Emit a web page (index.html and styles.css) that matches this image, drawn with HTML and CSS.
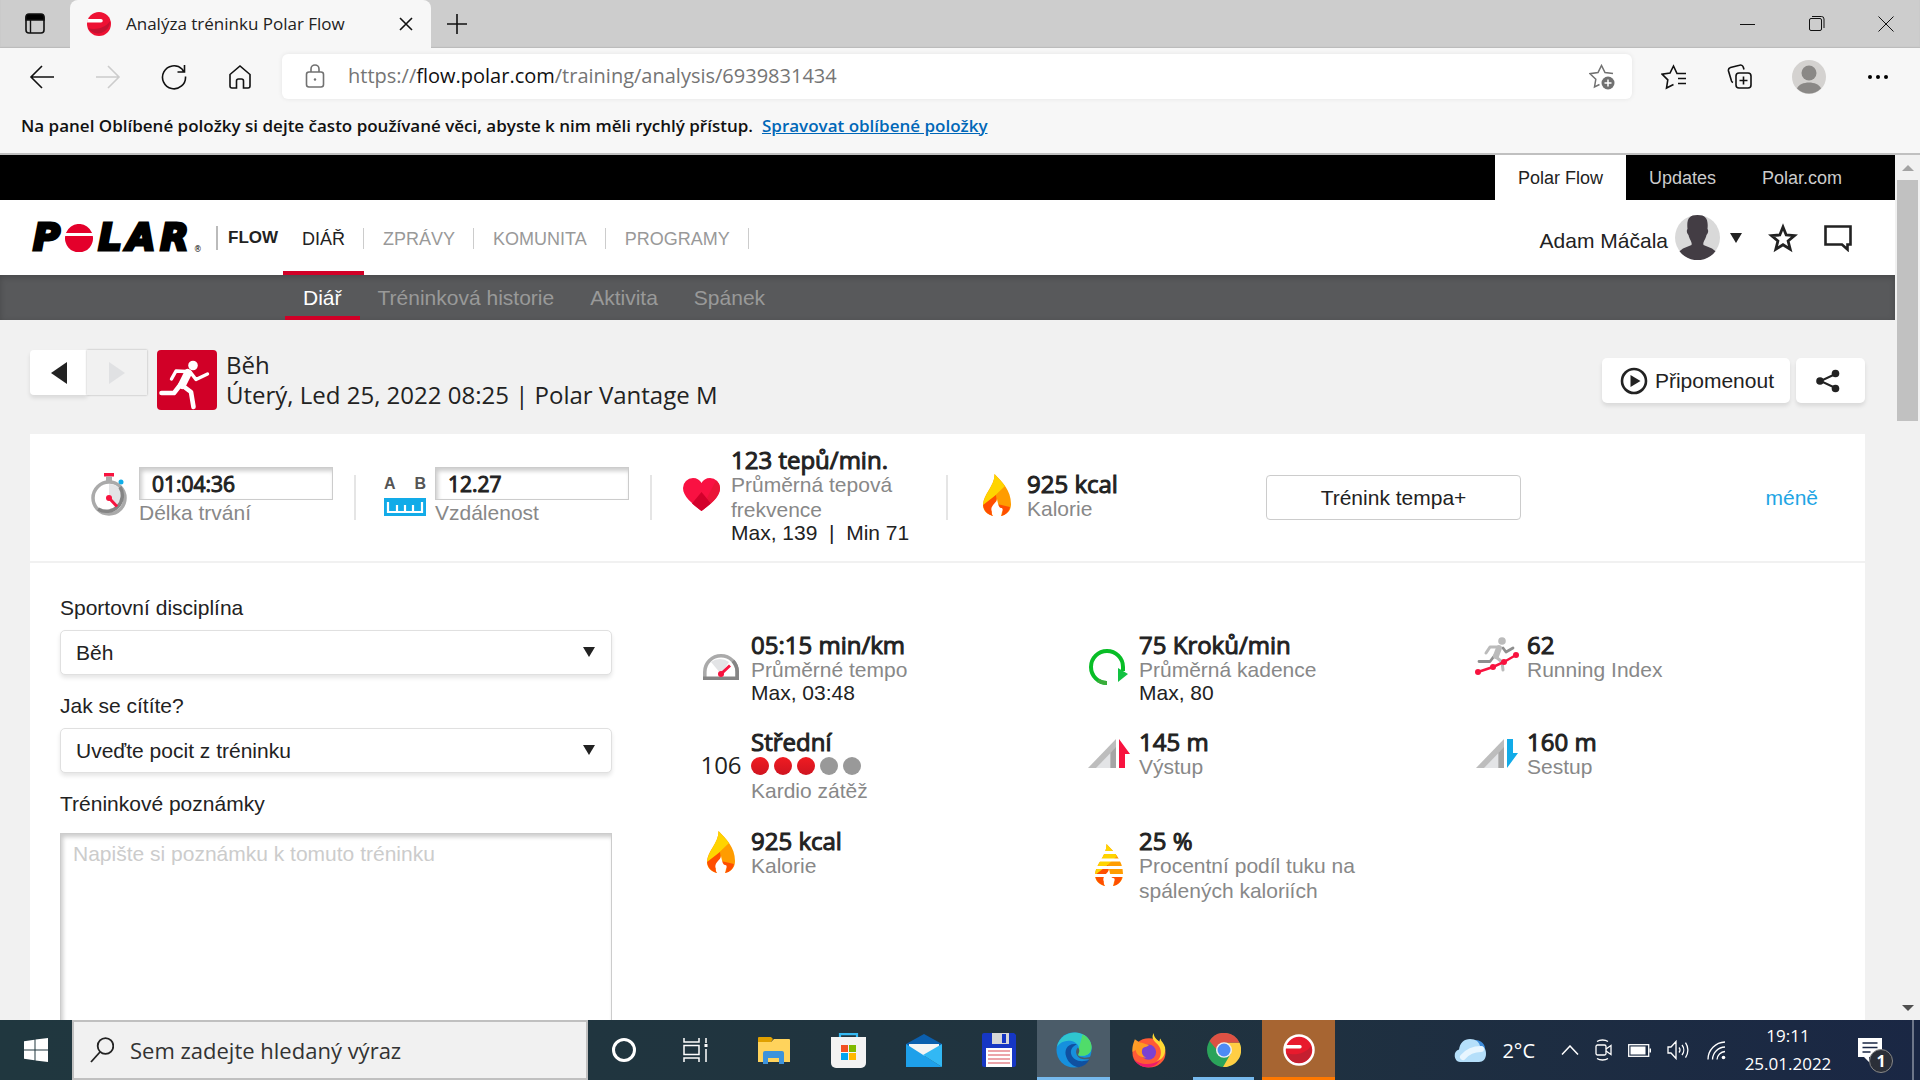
FILE: index.html
```html
<!DOCTYPE html>
<html lang="cs">
<head>
  <meta charset="UTF-8">
  <title>Analýza tréninku Polar Flow</title>
  <link rel="stylesheet" href="styles.css">
</head>
<body>
  <!-- Browser tabs -->
  <header class="tabstrip">
    <button class="tab-menu" aria-label="Karty"><svg width="22" height="24" viewBox="0 0 22 24"><rect x="2" y="3" width="18" height="18" rx="3" fill="none" stroke="#111" stroke-width="1.6"/><path d="M2 8V5a3 3 0 0 1 3-3h12a3 3 0 0 1 3 3v3zM6.500 8v13" stroke="#111" stroke-width="1.4"/></svg></button>
    <div class="tab">
      <svg width="26" height="26" viewBox="0 0 26 26"><circle cx="13" cy="13" r="12" fill="#ee1133"/><path d="M2 17c6 2 17 1 22-7a12 12 0 0 1-22 7z" fill="#c41230"/><path d="M1.500 8H15a1.600 1.600 0 0 1 0 3.500H1z" fill="#fff"/></svg>
      <span class="tab-title">Analýza tréninku Polar Flow</span>
      <button aria-label="Zavřít kartu"><svg width="14" height="14" viewBox="0 0 14 14"><path d="M1 1l12 12M13 1L1 13" stroke="#111" stroke-width="1.6"/></svg></button>
    </div>
    <button class="tab-new" aria-label="Nová karta"><svg width="22" height="22" viewBox="0 0 22 22"><path d="M11 1v20M1 11h20" stroke="#111" stroke-width="1.6"/></svg></button>
    <div class="window-buttons">
      <button aria-label="Minimalizovat"><svg width="16" height="16"><path d="M0 8.500h15" stroke="#111"/></svg></button>
      <button aria-label="Obnovit"><svg width="16" height="16" fill="none" stroke="#111"><rect x=".5" y="2.500" width="12" height="12" rx="1.500"/><path d="M3 .5h9.500a2.500 2.500 0 0 1 2.500 2.500v9"/></svg></button>
      <button aria-label="Zavřít"><svg width="16" height="16"><path d="M.5.5l15 15M15.500.5l-15 15" stroke="#111"/></svg></button>
    </div>
  </header>

  <!-- Browser toolbar -->
  <div class="toolbar">
    <button aria-label="Zpět"><svg width="26" height="26" viewBox="0 0 26 26" class="line"><path d="M25 13H2M13 2L2 13l11 11"/></svg></button>
    <button aria-label="Vpřed"><svg width="26" height="26" viewBox="0 0 26 26" class="line faded"><path d="M1 13h23M13 2l11 11-11 11"/></svg></button>
    <button aria-label="Aktualizovat"><svg width="26" height="26" viewBox="0 0 26 26" class="line"><path d="M24.500 12.500A11.500 11.500 0 1 1 21 5l2 3M23.500 1v7h-7"/></svg></button>
    <button aria-label="Domů"><svg width="26" height="26" viewBox="0 0 26 26" class="line"><path d="M3 10.500L13 2l10 8.500V22a2 2 0 0 1-2 2h-4.500v-7a2 2 0 0 0-2-2h-3a2 2 0 0 0-2 2v7H5a2 2 0 0 1-2-2z"/></svg></button>
    <div class="address">
      <svg width="20" height="26" viewBox="0 0 20 26" fill="none" stroke="#717171" stroke-width="1.600"><rect x="1.500" y="8" width="17" height="15" rx="2.500"/><path d="M6 8V5a4 4 0 0 1 8 0v3"/><circle cx="10" cy="15.500" r="1.200" fill="#717171" stroke="none"/></svg>
      <span class="url">https://<b>flow.polar.com</b>/training/analysis/6939831434</span>
      <button aria-label="Přidat do oblíbených"><svg width="26" height="26" viewBox="0 0 26 26" fill="none" stroke="#717171" stroke-width="1.500"><path d="M24 9.500l-8-1L12.500 1.500 9 8.500l-8 1.200 5.800 5.600L5.500 23l5-2.500"/><circle cx="19" cy="19" r="6.500" fill="#717171" stroke="none"/><path d="M19 15.500v7M15.500 19h7" stroke="#fff"/></svg></button>
    </div>
    <button aria-label="Oblíbené"><svg width="26" height="26" viewBox="0 0 26 26" class="line"><path d="M25 9.500h-9L12.500 2 9 9l-8 1.200 5.800 5.600L5.500 24l7-3.500M17 14.500h8M17 19.500h8"/></svg></button>
    <button aria-label="Kolekce"><svg width="26" height="26" viewBox="0 0 26 26" class="line"><rect x="9" y="9" width="15" height="15" rx="3"/><path d="M16.500 12.500v8M12.500 16.500h8M6 18.500A3 3 0 0 1 4.500 17L1.500 7a3 3 0 0 1 2-3.500l9-2.300a3 3 0 0 1 3.800 2L17 5.500"/></svg></button>
    <button class="profile" aria-label="Profil"><svg width="34" height="34" viewBox="0 0 34 34"><circle cx="17" cy="17" r="17" fill="#d4d2d0"/><circle cx="17" cy="13" r="7.500" fill="#8a8886"/><path d="M5 28.500c3-8 21-8 24 0a17 17 0 0 1-24 0z" fill="#8a8886"/></svg></button>
    <button aria-label="Další"><svg width="20" height="6" viewBox="0 0 20 6"><circle cx="2" cy="3" r="2"/><circle cx="10" cy="3" r="2"/><circle cx="18" cy="3" r="2"/></svg></button>
  </div>
  <div class="favorites">
    <span>Na panel Oblíbené položky si dejte často používané věci, abyste k nim měli rychlý přístup.</span>
    <a href="#">Spravovat oblíbené položky</a>
  </div>

  <div class="viewport">
    <div class="page">
      <nav class="topbar">
        <a href="#" class="active">Polar Flow</a>
        <a href="#">Updates</a>
        <a href="#">Polar.com</a>
      </nav>

      <header class="site-header">
        <a href="#" class="logo" aria-label="Polar">
          <span>P</span>
          <svg width="28" height="28" viewBox="0 0 28 28"><path d="M.9 9a14 14 0 0 1 26.200 0zM.2 12h27.600A14 14 0 1 1 .2 12z" fill="#e4002b"/></svg>
          <span>L</span><span>A</span><span>R</span>
          <small>®</small>
        </a>
        <span class="flow">FLOW</span>
        <nav class="main-nav">
          <a href="#" class="active">DIÁŘ</a>
          <a href="#">ZPRÁVY</a>
          <a href="#">KOMUNITA</a>
          <a href="#">PROGRAMY</a>
        </nav>
        <div class="user">
          <span>Adam Máčala</span>
          <svg width="45" height="45" viewBox="0 0 45 45"><circle cx="22.500" cy="22.500" r="22.500" fill="#d9d9d9"/><path d="M22.500 0C14 0 11.500 4 12.500 14c-1 1-1 4 1 6 1 5 4 7 3 10L8 33.500 4.500 36.200a22.500 22.500 0 0 0 36 0L37 33.500 28.500 30c-1-3 2-5 3-10 2-2 2-5 1-6C33.500 4 31 0 22.500 0z" fill="#433d44"/></svg>
          <svg width="12" height="10" viewBox="0 0 12 10"><path d="M0 0h12L6 10z" fill="#222"/></svg>
          <button aria-label="Oblíbené"><svg width="30" height="30" viewBox="0 0 30 30"><path d="M15 4l3.200 8 8.300.6-6.400 5.400 2.100 8.200L15 21.700l-7.200 4.500 2.100-8.200-6.400-5.400 8.300-.6z" fill="none" stroke="#222" stroke-width="2.800"/></svg></button>
          <button aria-label="Zprávy"><svg width="28" height="28" viewBox="0 0 28 28"><path d="M1.500 2.500h25v18h-3v5l-5.500-5H1.500z" fill="none" stroke="#222" stroke-width="2.600"/></svg></button>
        </div>
      </header>

      <nav class="sub-nav">
        <a href="#" class="active">Diář</a>
        <a href="#">Tréninková historie</a>
        <a href="#">Aktivita</a>
        <a href="#">Spánek</a>
      </nav>

      <!-- Training title -->
      <section class="title-row">
        <div class="pager">
          <button aria-label="Předchozí"><svg width="16" height="22" viewBox="0 0 16 22"><path d="M16 0v22L0 11z" fill="#222"/></svg></button>
          <button aria-label="Další" disabled><svg width="16" height="22" viewBox="0 0 16 22"><path d="M0 0v22l16-11z" fill="#e0e1e3"/></svg></button>
        </div>
        <svg class="sport" width="60" height="60" viewBox="0 0 60 60"><rect width="60" height="60" rx="4" fill="#d10027"/><circle cx="36" cy="15.500" r="4.800" fill="#fff"/><g fill="none" stroke="#fff" stroke-linecap="round" stroke-linejoin="round"><path d="M31 23L25 35" stroke-width="8"/><path d="M29 21.500l-10-.5-4.500 8M34 23l5 6.500L50.500 24" stroke-width="3.400"/><path d="M24 34L17 43H4.500M26 36l8 6 2.500 15" stroke-width="4.600"/></g></svg>
        <h1>Běh<br>Úterý, Led 25, 2022 08:25 | Polar Vantage M</h1>
        <div class="actions">
          <button class="relive"><svg width="28" height="28" viewBox="0 0 28 28"><circle cx="14" cy="14" r="12" fill="none" stroke="#222" stroke-width="2.600"/><path d="M10.500 8v12l10-6z" fill="#222"/></svg>Připomenout</button>
          <button class="share" aria-label="Sdílet"><svg width="24" height="24" viewBox="0 0 24 24" fill="#222"><path d="M19.500 5L4.500 12l15 7" fill="none" stroke="#222" stroke-width="2"/><circle cx="19.500" cy="4.500" r="3.800"/><circle cx="4" cy="12" r="3.800"/><circle cx="19.500" cy="19.500" r="3.800"/></svg></button>
        </div>
      </section>

      <main class="card">
        <section class="summary">
          <div class="stat">
            <span class="icon"><svg width="36" height="44" viewBox="0 0 36 44"><rect x="13" y="0" width="10" height="3.500" fill="#f8133f"/><rect x="15" y="3.500" width="6" height="5" fill="#aaa"/><circle cx="30" cy="9" r="2.500" fill="#10aee9"/><circle cx="18" cy="25" r="16" fill="#fff" stroke="#aaa" stroke-width="3.500"/><path d="M18 25V11a14 14 0 0 1 10 24z" fill="#e3e4e6"/><path d="M29 14a16 16 0 0 1-22 22" fill="none" stroke="#858585" stroke-width="3.500"/><circle cx="18" cy="25" r="3" fill="#f8133f"/><path d="M18 25l8 8.500" stroke="#f8133f" stroke-width="3"/></svg></span>
            <div class="text">
              <input id="duration" type="text" value="01:04:36">
              <label for="duration">Délka trvání</label>
            </div>
          </div>
          <div class="stat">
            <span class="icon"><svg width="42" height="42" viewBox="0 0 42 42"><text x="0" y="15" class="ab">A</text><text x="42" y="15" text-anchor="end" class="ab">B</text><rect y="24" width="42" height="18" fill="#12abe8"/><path d="M4 28v10h34V28M13 38v-7M21 38v-7M29 38v-7" fill="none" stroke="#fff" stroke-width="2.200"/></svg></span>
            <div class="text">
              <input id="distance" type="text" value="12.27">
              <label for="distance">Vzdálenost</label>
            </div>
          </div>
          <div class="stat">
            <span class="icon"><svg width="37" height="33" viewBox="0 0 37 33"><path d="M18.500 33C10 26 0 19 0 10A10 10 0 0 1 10 0c4 0 7 2 8.500 5C20 2 23 0 27 0a10 10 0 0 1 10 10c0 9-10 16-18.500 23z" fill="#f91142"/><path d="M18.500 14l9.500 11.500c-3 2.600-6 5-9.500 7.500-3.500-2.500-6.500-4.900-9.500-7.500z" fill="#d3002b"/><path d="M33 2.500L24 20l4 5.500c5-4.500 9-9.500 9-15.500 0-3-1.500-6-4-7.500z" fill="#ea1537"/></svg></span>
            <div class="text">
              <strong>123 tepů/min.</strong>
              <span>Průměrná tepová frekvence</span>
              <em>Max, 139&nbsp; |&nbsp; Min 71</em>
            </div>
          </div>
          <div class="stat">
            <span class="icon"><svg width="28" height="42" viewBox="0 0 28 42"><path d="M11.500 0C12 12 0 20 0 31c0 5 3 9 10 11-4-5 2-9 4-9s6 5 4 9c7-2 10-6 10-12 0-14-9-22-16.500-30z" fill="#ff9c00"/><path d="M11.500 0C12 12 0 20 0 33L22 12C19 8 15 4 11.500 0z" fill="#ffd400"/><path d="M0 31l13-10 1 9 13 3c-1 5-4 8-9 9 3-4 1-7-2-8l-2-4c-2 4-8 7-4 12-6-2-9-5-10-11z" fill="#ff4e00"/><path d="M14 25c0 4-8 7-5 13 1 3 3 4 5 4s4-1 5-4c1-2 1-4-1-4s-3-4-4-9z" fill="#fff"/></svg></span>
            <div class="text">
              <strong>925 kcal</strong>
              <span>Kalorie</span>
            </div>
          </div>
          <button class="tag">Trénink tempa+</button>
          <a href="#" class="less">méně</a>
        </section>

        <section class="details">
          <form class="notes">
            <label for="sport">Sportovní disciplína</label>
            <div class="select">
              <select id="sport"><option>Běh</option></select>
              <svg width="12" height="10" viewBox="0 0 12 10"><path d="M0 0h12L6 10z" fill="#222"/></svg>
            </div>
            <label for="feeling">Jak se cítíte?</label>
            <div class="select">
              <select id="feeling"><option>Uveďte pocit z tréninku</option></select>
              <svg width="12" height="10" viewBox="0 0 12 10"><path d="M0 0h12L6 10z" fill="#222"/></svg>
            </div>
            <label for="note">Tréninkové poznámky</label>
            <textarea id="note" placeholder="Napište si poznámku k tomuto tréninku"></textarea>
          </form>

          <div class="metrics">
            <div class="metric">
              <span class="icon"><svg width="36" height="26" viewBox="0 0 36 26"><path d="M1.800 26V18a16.200 16.200 0 0 1 32.400 0v8" fill="#fff" stroke="#aaa" stroke-width="3.600"/><path d="M18 20L8 8a15 15 0 0 1 18 0z" fill="#e3e4e6"/><path d="M30 7a16 16 0 0 1 4.200 11v6.200H0" fill="none" stroke="#858585" stroke-width="3.600"/><circle cx="18" cy="20" r="3" fill="#f8133f"/><path d="M18 20l9-8.500" stroke="#f8133f" stroke-width="3"/></svg></span>
              <div class="text"><strong>05:15 min/km</strong><span>Průměrné tempo</span><em>Max, 03:48</em></div>
            </div>
            <div class="metric">
              <span class="icon"><svg width="40" height="36" viewBox="0 0 40 36"><path d="M18 34A16 16 0 1 1 34 18v4" fill="none" stroke="#08bd26" stroke-width="4"/><path d="M18 34a16 16 0 0 1-9-2.700" fill="none" stroke="#3bac3b" stroke-width="4"/><path d="M29 19l10 6-10 8z" fill="#12c242"/></svg></span>
              <div class="text"><strong>75 Kroků/min</strong><span>Průměrná kadence</span><em>Max, 80</em></div>
            </div>
            <div class="metric">
              <span class="icon"><svg width="44" height="38" viewBox="0 0 44 38"><circle cx="27" cy="4" r="3.800" fill="#bbb"/><g fill="none" stroke-linecap="round" stroke-linejoin="round"><path d="M20 18l-5 6.500H4M28 11l3 4 7-4" stroke="#8f8f8f" stroke-width="2.800"/><path d="M24 11l-3 8" stroke="#bbb" stroke-width="6"/><path d="M22 10h-7l-4 6M21 20l6 5 1 8" stroke="#bbb" stroke-width="3"/></g><path d="M3 35l15-5 11-5 12-7" fill="none" stroke="#f8133f" stroke-width="2.500"/><g fill="#f8133f"><circle cx="3" cy="35" r="3"/><circle cx="18" cy="30" r="3"/><circle cx="29" cy="25" r="3"/><circle cx="41" cy="18" r="3"/></g></svg></span>
              <div class="text"><strong>62</strong><span>Running Index</span></div>
            </div>
            <div class="metric">
              <span class="score">106</span>
              <div class="text"><strong>Střední</strong><div class="dots"><i class="on"></i><i class="on"></i><i class="on"></i><i></i><i></i></div><span>Kardio zátěž</span></div>
            </div>
            <div class="metric">
              <span class="icon"><svg width="42" height="29" viewBox="0 0 42 29"><path d="M0 29L28 0v29z" fill="#bdbdbd"/><path d="M8 29L22.500 14v15z" fill="#e3e4e6"/><path d="M22.500 14L28 8v21h-5.500z" fill="#a5a5a5"/><path d="M31 0l11 15h-5v14h-6z" fill="#f8133f"/></svg></span>
              <div class="text"><strong>145 m</strong><span>Výstup</span></div>
            </div>
            <div class="metric">
              <span class="icon"><svg width="42" height="29" viewBox="0 0 42 29"><path d="M0 29L28 0v29z" fill="#bdbdbd"/><path d="M8 29L22.500 14v15z" fill="#e3e4e6"/><path d="M22.500 14L28 8v21h-5.500z" fill="#a5a5a5"/><path d="M31 29l11-15h-5V0h-6z" fill="#12abe8"/></svg></span>
              <div class="text"><strong>160 m</strong><span>Sestup</span></div>
            </div>
            <div class="metric">
              <span class="icon"><svg width="28" height="42" viewBox="0 0 28 42"><path d="M11.500 0C12 12 0 20 0 31c0 5 3 9 10 11-4-5 2-9 4-9s6 5 4 9c7-2 10-6 10-12 0-14-9-22-16.500-30z" fill="#ff9c00"/><path d="M11.500 0C12 12 0 20 0 33L22 12C19 8 15 4 11.500 0z" fill="#ffd400"/><path d="M0 31l13-10 1 9 13 3c-1 5-4 8-9 9 3-4 1-7-2-8l-2-4c-2 4-8 7-4 12-6-2-9-5-10-11z" fill="#ff4e00"/><path d="M14 25c0 4-8 7-5 13 1 3 3 4 5 4s4-1 5-4c1-2 1-4-1-4s-3-4-4-9z" fill="#fff"/></svg></span>
              <div class="text"><strong>925 kcal</strong><span>Kalorie</span></div>
            </div>
            <div class="metric">
              <span class="icon"><svg width="28" height="42" viewBox="0 0 28 42"><path d="M11.500 0C12 12 0 20 0 31c0 5 3 9 10 11-4-5 2-9 4-9s6 5 4 9c7-2 10-6 10-12 0-14-9-22-16.500-30z" fill="#ff9c00"/><path d="M11.500 0C12 12 0 20 0 33L22 12C19 8 15 4 11.500 0z" fill="#ffd400"/><path d="M0 31l13-10 1 9 13 3c-1 5-4 8-9 9 3-4 1-7-2-8l-2-4c-2 4-8 7-4 12-6-2-9-5-10-11z" fill="#ff4e00"/><path d="M14 25c0 4-8 7-5 13 1 3 3 4 5 4s4-1 5-4c1-2 1-4-1-4s-3-4-4-9z" fill="#fff"/><path d="M0 8.500h28M0 16h28M0 23.500h28M0 31.500h28" stroke="#fff" stroke-width="3"/></svg></span>
              <div class="text"><strong>25 %</strong><span>Procentní podíl tuku na spálených kaloriích</span></div>
            </div>
          </div>
        </section>
      </main>
    </div>
    <div class="scrollbar">
      <svg width="12" height="6" viewBox="0 0 12 6"><path d="M0 6h12L6 0z" fill="#a3a3a3"/></svg>
      <div class="thumb"></div>
      <svg width="12" height="6" viewBox="0 0 12 6"><path d="M0 0h12L6 6z" fill="#505050"/></svg>
    </div>
  </div>

  <!-- Windows taskbar -->
  <footer class="taskbar">
    <button class="start" aria-label="Start"><svg width="24" height="24" viewBox="0 0 24 24"><path d="M0 3.300l10.500-1.500v9.700H0zM11.500 1.600L24 0v11.500H11.500zM0 12.500h10.500v9.700L0 20.700zM11.500 12.500H24V24l-12.500-1.600z" fill="#fff"/></svg></button>
    <label class="search">
      <svg width="24" height="26" viewBox="0 0 24 26" fill="none" stroke="#222" stroke-width="1.800"><circle cx="15.500" cy="9" r="7.800"/><path d="M10 15L1 25"/></svg>
      <input type="text" placeholder="Sem zadejte hledaný výraz">
    </label>
    <button class="sys" aria-label="Cortana"><svg width="26" height="26"><circle cx="13" cy="13" r="10.500" fill="none" stroke="#fff" stroke-width="3"/></svg></button>
    <button class="sys" aria-label="Zobrazení úloh"><svg width="26" height="26" viewBox="0 0 26 26" fill="none" stroke="#fff" stroke-width="1.500"><path d="M1 1v4h15V1M1 25v-4h15v4M1 8.500h15v9H1zM23 1v5M23 12v13"/><path d="M21.500 7h3v3h-3z" fill="#fff" stroke="none"/></svg></button>
    <div class="apps">
      <button aria-label="Průzkumník souborů"><svg width="32" height="27" viewBox="0 0 32 27"><path d="M0 1a1 1 0 0 1 1-1h12l2 2-2 3H0z" fill="#e0a000"/><path d="M0 5h13l3-3h15a1 1 0 0 1 1 1v22H0z" fill="#ffd35c"/><path d="M5 16a2 2 0 0 1 2-2h17a2 2 0 0 1 2 2v11h-5v-6H10v6H5z" fill="#3d93dc"/></svg></button>
      <button aria-label="Microsoft Store"><svg width="35" height="35" viewBox="0 0 35 35"><path d="M9 6V1.200h17V6" fill="none" stroke="#35b9f2" stroke-width="2.200"/><path d="M0 4h35v26a5 5 0 0 1-5 5H5a5 5 0 0 1-5-5z" fill="#f3f3f3"/><path d="M10 12h7v7h-7z" fill="#f25022"/><path d="M18 12h7v7h-7z" fill="#7fba00"/><path d="M10 20h7v7h-7z" fill="#00a4ef"/><path d="M18 20h7v7h-7z" fill="#ffb900"/></svg></button>
      <button aria-label="Pošta"><svg width="36" height="33" viewBox="0 0 36 33"><path d="M0 10L18 0l18 10v4H0z" fill="#0b5fae"/><path d="M3 10h30v12H3z" fill="#f4f4f4"/><path d="M0 10l36 23H0z" fill="#1ea0ea"/><path d="M36 10v23L17 21z" fill="#32b8f4"/></svg></button>
      <button aria-label="Total Commander"><svg width="34" height="34" viewBox="0 0 34 34"><path d="M0 2a2 2 0 0 1 2-2h30l2 2v30a2 2 0 0 1-2 2H2a2 2 0 0 1-2-2z" fill="#1637c4"/><path d="M10 0h17v11H10z" fill="#d7d7d7"/><path d="M20 1h4v9h-4z" fill="#1637c4"/><path d="M4 15h26v19H4z" fill="#fff"/><path d="M6 18h22M6 22h22M6 26h22M6 30h22" stroke="#d94a55" stroke-width="1.200"/></svg></button>
      <button class="focused" aria-label="Microsoft Edge"><svg width="36" height="36" viewBox="0 0 38 44" preserveAspectRatio="none"><ellipse cx="19" cy="22" rx="18.500" ry="21.500" fill="#1690dd"/><path d="M1 18C4 4 14 0 21 .5 31 1 37 9 37.500 18c.5 8-5 12-12 11-5-1-4-3-2-6s0-10-7-12c-6-1.500-12 1-15.500 7z" fill="#2fc6cf"/><path d="M28 3c6 3 9.500 9 9.500 15 0 8-5 12-12 11-3-.5-4-2-2.500-4z" fill="#50dc6a"/><path d="M22 15c-10-2-14 7-11 16 2 7 8 12 13 12 5-1 9-4 11-9-9 4-17 1-19-7-1-5 1-9 6-12z" fill="#1050a0"/><path d="M23 19c-4 5-1 13 5 14 4 1 8 0 10-1v-3c-4 3-10 3-13 1-2-1-2-2-1-4s1-5-1-7z" fill="#4b5c69"/></svg></button>
      <button aria-label="Firefox"><svg width="34" height="35" viewBox="0 0 36 44" preserveAspectRatio="none"><ellipse cx="18" cy="25" rx="17.500" ry="18.500" fill="#ff5a36"/><path d="M23 0c-3 6 0 10 4 14 5 6 5 16-1 22 7-3 10-10 9-18-1-5-4-7-5-11-1 2-1 4-1 4-3-3-6-6-6-11z" fill="#ffd833"/><path d="M3 8c-1 4-3 8-2.500 16L12 15z" fill="#ff9d28"/><ellipse cx="17.500" cy="24" rx="8" ry="9.500" fill="#7a42d2"/><path d="M6 12c5-1 7 2 12 3-2 3-6 2-7 5s-1 8 4 11C5 31 1 22 6 12z" fill="#ff9a22"/><path d="M2 33c5 7 20 9 28 0-3 7-8 10-13 10-7 0-12-4-15-10z" fill="#ee1b6a"/></svg></button>
      <button class="running" aria-label="Chrome"><svg width="34" height="34" viewBox="0 0 34 42" preserveAspectRatio="none"><ellipse cx="17" cy="21" rx="17" ry="21" fill="#2aa35a"/><path d="M17 12h15.500A17 21 0 0 1 16 42l8-17z" fill="#ffce44"/><path d="M2.500 10A17 21 0 0 1 32.500 12H17l-7 9z" fill="#dd5144"/><ellipse cx="17" cy="21" rx="8" ry="9.500" fill="#f1f1f1"/><ellipse cx="17" cy="21" rx="6.500" ry="8" fill="#4c8bf5"/></svg></button>
      <button class="alert" aria-label="Polar FlowSync"><svg width="32" height="32" viewBox="0 0 32 32"><circle cx="16" cy="16" r="14.500" fill="#e81a2d" stroke="#fff" stroke-width="2.500"/><path d="M3.500 19c8 3 19 1 24.500-7 2 8-3 17-12 17-7 0-10.500-4-12.500-10z" fill="#c41f30"/><path d="M2 11h15a1.700 1.700 0 0 1 0 3.400H2z" fill="#fff"/></svg></button>
    </div>
    <div class="tray">
      <svg class="cloud" width="32" height="23" viewBox="0 0 32 23"><path d="M18 2a9 9 0 0 1 13 9l-3 6z" fill="#3f8ddb"/><path d="M6 23a6.500 6.500 0 0 1-1-12.500C6 4 10 0 16 0s9 3 10 7c4 0 6 3 6 8s-3 8-7 8z" fill="#b5dffa"/><path d="M9 18c6-7 12-8 18-8" fill="none" stroke="#e8f6ff" stroke-width="6" stroke-linecap="round"/></svg>
      <span class="temp">2°C</span>
      <svg width="18" height="10" viewBox="0 0 18 10" fill="none" stroke="#fff" stroke-width="1.500"><path d="M1 9.500L9 1l8 8.500"/></svg>
      <svg width="17" height="24" viewBox="0 0 17 24" fill="none" stroke="#fff" stroke-width="1.300"><rect x="1" y="7" width="10" height="10" rx="1.500"/><path d="M11 11l5-3.500v9L11 13M2 3.500c3-2 8-2 11 0M2 20.500c3 2 8 2 11 0"/></svg>
      <svg width="23" height="13" viewBox="0 0 23 13"><rect x=".7" y=".7" width="20" height="11.600" fill="none" stroke="#fff" stroke-width="1.300"/><path d="M2.500 2.500h15v8h-15zM21.500 4.500H23v4h-1.500z" fill="#fff"/></svg>
      <svg width="24" height="20" viewBox="0 0 24 20" fill="none" stroke="#fff" stroke-width="1.300"><path d="M1 7h3l5-5.500v17L4 13H1zM12 7.500a4 4 0 0 1 0 5M15 5a8 8 0 0 1 0 10M18.500 2.500a13 13 0 0 1 0 15"/></svg>
      <svg width="19" height="19" viewBox="0 0 19 19" fill="none" stroke="#fff" stroke-width="1.300"><path d="M1 18.500A17.500 17.500 0 0 1 18 1M5.500 18.500A13 13 0 0 1 18 6M10 18.500A8.500 8.500 0 0 1 18 10.500"/><circle cx="16.500" cy="16.500" r="1.800" fill="#fff" stroke="none"/></svg>
      <time>19:11<br>25.01.2022</time>
      <button class="notify" aria-label="Oznámení">
        <svg width="24" height="24" viewBox="0 0 24 24"><path d="M0 0h24v19H11v5l-5-5H0z" fill="#fff"/><path d="M4.500 5h15M4.500 9.500h15M4.500 14h8" stroke="#1a2744" stroke-width="1.300"/></svg>
        <span class="badge">1</span>
      </button>
    </div>
  </footer>
</body>
</html>
```
FILE: styles.css
```css
* {
  box-sizing: border-box;
}
body {
  margin: 0;
  height: 100vh;
  display: flex;
  flex-direction: column;
  overflow: hidden;
  font-family: "Liberation Sans", Arial, sans-serif;
  font-size: 21px;
  color: #222;
  background-color: #f1f1f1;
}
a {
  color: inherit;
  text-decoration: none;
}
button {
  display: flex;
  align-items: center;
  justify-content: center;
  border: 0;
  padding: 0;
  background: none;
  color: inherit;
  font: inherit;
}
svg {
  display: block;
  flex: none;
}

/* browser window */
.tabstrip, .toolbar, .favorites, .taskbar {
  font-family: "Open Sans", "Noto Sans", sans-serif;
  flex: none;
  display: flex;
  align-items: center;
}
.tabstrip {
  height: 48px;
  background-color: #cdcdcd;
  box-shadow: inset 0 -1px 1px #bbb;
}
.tab-menu {
  width: 70px;
}
.tab {
  width: 361px;
  height: 48px;
  display: flex;
  align-items: center;
  padding: 0 18px 0 16px;
  border-radius: 8px 8px 0 0;
  background-color: #f7f7f7;
  font-size: 17px;
}
.tab-title {
  flex: 1;
  margin-left: 14px;
  padding-bottom: 2px;
}
.tab-new {
  width: 52px;
}
.window-buttons {
  margin-left: auto;
  display: flex;
}
.window-buttons button {
  width: 69px;
  height: 47px;
}
.toolbar {
  height: 57px;
  padding: 0 9px;
  background-color: #f7f7f7;
}
.toolbar > button {
  width: 66px;
  height: 48px;
}
.toolbar > .profile {
  width: 72px;
}
.line {
  fill: none;
  stroke: #111;
  stroke-width: 1.6;
}
.faded {
  stroke: #ccc;
}
.address {
  flex: 1;
  height: 45px;
  display: flex;
  align-items: center;
  margin: 0 9px;
  padding: 0 17px 0 23px;
  border-radius: 6px;
  background-color: #fff;
  box-shadow: 0 0 5px rgba(0,0,0,0.08);
}
.url {
  flex: 1;
  margin-left: 23px;
  padding-bottom: 2px;
  font-size: 20px;
  color: #757575;
}
.url b {
  font-weight: normal;
  color: #111;
}
.favorites {
  height: 50px;
  gap: 9px;
  padding: 0 21px 8px;
  border-bottom: 2px solid #c0c0c0;
  background-color: #f7f7f7;
  font-size: 17px;
  font-weight: 600;
  color: #111;
}
.favorites a {
  color: #0067b8;
  text-decoration: underline;
}

/* page and its scrollbar */
.viewport {
  flex: 1;
  min-height: 0;
  display: flex;
}
.page {
  flex: 1;
  overflow: hidden;
}
.scrollbar {
  width: 25px;
  display: flex;
  flex-direction: column;
  align-items: center;
  padding: 10px 0 9px;
  background-color: #f1f1f1;
}
.thumb {
  width: 21px;
  height: 241px;
  margin: 9px 0 auto;
  background-color: #c1c1c1;
}

/* site header */
.topbar {
  height: 45px;
  display: flex;
  justify-content: flex-end;
  padding-right: 30px;
  background-color: #000;
  color: #ccc;
  font-size: 18px;
  line-height: 46px;
}
.topbar a {
  height: 45px;
  padding: 0 23px;
}
.topbar .active {
  background-color: #fff;
  color: #222;
}
.site-header {
  height: 75px;
  display: flex;
  align-items: center;
  padding: 0 43px 0 33px;
  background-color: #fff;
}
.logo {
  display: flex;
  align-items: center;
  gap: 5px;
  width: 170px;
  font-family: "DejaVu Sans", sans-serif;
  font-size: 37px;
  font-weight: bold;
  font-style: oblique;
  line-height: 36px;
  color: #000;
  -webkit-text-stroke: 3px #000;
}
.logo small {
  align-self: flex-end;
  font-size: 8px;
  line-height: 12px;
  font-style: normal;
  font-weight: normal;
  -webkit-text-stroke: 0;
}
.flow {
  margin: 0 5px 0 13px;
  padding-left: 10px;
  border-left: 2px solid #bbb;
  font-size: 17px;
  font-weight: bold;
  line-height: 24px;
}
.main-nav {
  display: flex;
  align-self: stretch;
  font-size: 18px;
  line-height: 78px;
  color: #999;
}
.main-nav a {
  position: relative;
  height: 75px;
  padding: 0 19px;
}
.main-nav a::after {
  content: "";
  position: absolute;
  right: 0;
  top: 28px;
  height: 21px;
  border-right: 1px solid #ccc;
}
.main-nav .active {
  border-bottom: 4px solid #d10027;
  color: #222;
}
.user {
  margin-left: auto;
  display: flex;
  align-items: center;
  line-height: 24px;
}
.user span {
  margin: 6px 7px 0 0;
}
.user svg + svg {
  margin-left: 10px;
}
.user button {
  margin-left: 26px;
}
.sub-nav {
  height: 45px;
  display: flex;
  padding-left: 285px;
  background-color: #58595b;
  box-shadow: inset 0 2px 6px rgba(0,0,0,0.2);
  color: #999;
  line-height: 45px;
}
.sub-nav a {
  padding: 0 18px;
}
.sub-nav .active {
  border-bottom: 4px solid #d10027;
  color: #fff;
}

/* training title */
.title-row {
  display: flex;
  padding: 30px 30px 24px;
}
.pager {
  display: flex;
  height: 45px;
}
.pager button {
  width: 57px;
  background-color: #fff;
  border-radius: 4px 0 0 4px;
  box-shadow: 0 3px 4px rgba(0,0,0,0.1);
}
.pager button:disabled {
  width: 60px;
  background-color: #f1f1f1;
  border-radius: 0;
  box-shadow: 0 0 2px rgba(0,0,0,0.3);
}
.sport {
  margin: 0 9px 0 10px;
}
h1 {
  margin: 0;
  font-family: "Open Sans", sans-serif;
  font-size: 24px;
  font-weight: normal;
  line-height: 30px;
}
.actions {
  margin-left: auto;
  display: flex;
  gap: 6px;
  padding-top: 8px;
}
.actions button {
  height: 45px;
  border-radius: 5px;
  background-color: #fff;
  box-shadow: 0 3px 4px rgba(0,0,0,0.1);
}
.relive {
  gap: 7px;
  padding: 0 16px 0 18px;
}
.actions .share {
  width: 69px;
  padding-right: 6px;
}

/* training card */
.card {
  margin: 0 30px;
  background-color: #fff;
}
.summary {
  height: 129px;
  display: flex;
  align-items: center;
  padding: 0 47px 0 30px;
  border-bottom: 2px solid #f1f1f1;
}
.stat {
  position: relative;
  width: 296px;
  height: 127px;
  display: flex;
  align-items: center;
  gap: 6px;
  padding: 0 0 3px 25px;
}
.stat:nth-child(-n+3)::after {
  content: "";
  position: absolute;
  right: 0;
  top: 41px;
  height: 45px;
  border-right: 2px solid #e5e5e5;
}
.icon, .score {
  width: 48px;
  flex: none;
  display: flex;
  justify-content: center;
  padding-bottom: 3px;
}
.score {
  font-family: "Open Sans", sans-serif;
  font-size: 24px;
  line-height: 24px;
}
.ab {
  font-size: 16px;
  font-weight: bold;
  fill: #555;
}
.text {
  display: flex;
  flex-direction: column;
  color: #888;
  line-height: 25px;
}
.text strong {
  font-family: "Open Sans", sans-serif;
  font-size: 24px;
  font-weight: normal;
  line-height: 24px;
  -webkit-text-stroke: 1px #222;
  color: #222;
}
.text em {
  font-style: normal;
  line-height: 22px;
  color: #222;
}
.stat .text {
  max-width: 200px;
}
.stat input {
  width: 194px;
  height: 33px;
  padding: 0 12px;
  border: 1px solid #ccc;
  box-shadow: inset 2px 3px 4px #ccc;
  font-family: "Open Sans", sans-serif;
  font-size: 21px;
  color: #222;
  -webkit-text-stroke: 1px #222;
}
.tag {
  width: 255px;
  height: 45px;
  margin-left: 22px;
  border: 1px solid #ccc;
  border-radius: 4px;
}
.less {
  margin-left: auto;
  color: #1ea5e4;
}
.details {
  display: flex;
  padding-left: 30px;
}
.notes {
  width: 552px;
  display: flex;
  flex-direction: column;
  padding-top: 31px;
}
.notes label {
  line-height: 27px;
  margin-bottom: 9px;
}
.select {
  position: relative;
  margin-bottom: 17px;
}
.select select {
  appearance: none;
  width: 100%;
  height: 45px;
  padding: 0 15px 1px;
  border: 1px solid #e0e0e0;
  border-radius: 5px;
  box-shadow: 0 3px 4px rgba(0,0,0,0.1);
  background-color: #fff;
  color: #222;
  font: inherit;
}
.select svg {
  position: absolute;
  right: 17px;
  top: 17px;
}
textarea {
  height: 300px;
  margin-top: 7px;
  padding: 8px 12px;
  border: 1px solid #ccc;
  box-shadow: inset 2px 3px 4px #ccc;
  resize: none;
  font: inherit;
}
textarea::placeholder {
  color: #ccc;
}
.metrics {
  flex: 1;
  display: grid;
  grid-template-columns: repeat(3, 1fr);
  align-content: start;
  align-items: start;
  row-gap: 26px;
  margin-left: 85px;
  padding: 70px 4px 0 0;
}
.metric {
  display: flex;
  align-items: center;
  gap: 6px;
}
.metric .text {
  max-width: 240px;
}
.dots {
  height: 24px;
  display: flex;
  align-items: center;
  gap: 5px;
}
.dots i {
  width: 18px;
  height: 18px;
  border-radius: 50%;
  background-color: #999;
}
.dots .on {
  background: linear-gradient(#f01c22, #cf1420);
}

/* windows taskbar */
.taskbar {
  height: 60px;
  background: linear-gradient(90deg, #20373f, #20333f 60%, #1a2744);
  color: #fff;
}
.start {
  width: 72px;
  height: 60px;
}
.search {
  width: 516px;
  height: 60px;
  display: flex;
  align-items: center;
  gap: 14px;
  padding: 0 16px;
  border: 2px solid #c0c0c0;
  background-color: #f1f1f1;
}
.search input {
  flex: 1;
  border: 0;
  background: none;
  font-family: inherit;
  font-size: 22px;
}
.search input::placeholder {
  color: #333;
}
.sys {
  width: 72px;
}
.apps {
  display: flex;
  gap: 2px;
  margin-left: 5px;
}
.apps button {
  width: 73px;
  height: 60px;
}
.focused {
  background-color: #4b5c69;
  box-shadow: inset 0 -3px #76b9ed;
}
.running {
  background: linear-gradient(#76b9ed, #76b9ed) center bottom / 61px 3px no-repeat;
}
.alert {
  background-color: #a76532;
  box-shadow: inset 0 -3px #ff7800;
}
.tray {
  margin-left: auto;
  height: 60px;
  display: flex;
  align-items: center;
  gap: 16px;
  margin-right: 6px;
  padding-right: 30px;
  border-right: 2px solid #6d7689;
  font-size: 18px;
}
.temp {
  margin-right: 10px;
  font-size: 20px;
}
.tray time {
  width: 92px;
  font-size: 17px;
  line-height: 28px;
  text-align: center;
}
.notify {
  position: relative;
  margin-left: 8px;
}
.badge {
  position: absolute;
  left: 11px;
  top: 11px;
  width: 24px;
  height: 24px;
  border: 1px solid #888;
  border-radius: 50%;
  background-color: #2b2f38;
  font-size: 16px;
  font-weight: bold;
  line-height: 22px;
}
```
